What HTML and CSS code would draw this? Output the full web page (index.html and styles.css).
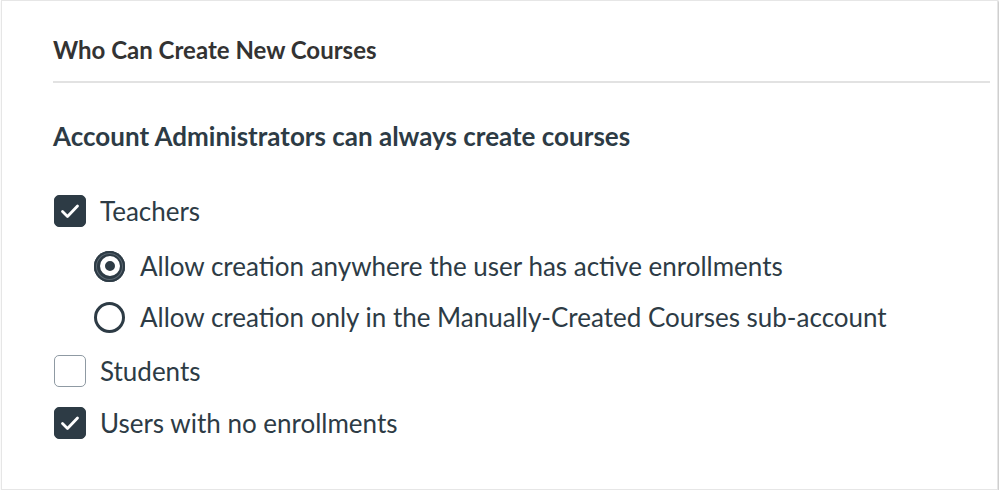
FILE: index.html
```html
<!DOCTYPE html>
<html lang="en">
<head>
  <meta charset="UTF-8" />
  <title>Who Can Create New Courses</title>
  <link rel="stylesheet" href="styles.css">
</head>
<body>
  <div class="panel">
    <div class="panel-header">
      <h2>Who Can Create New Courses</h2>
    </div>

    <h3 class="note">Account Administrators can always create courses</h3>

    <div class="options">
      <label class="check-row">
        <span class="checkbox checked">
          <svg viewBox="0 0 32 32" width="32" height="32"><polyline points="8.5,16.5 13.5,21.5 23.5,11" fill="none" stroke="#fff" stroke-width="2.8" stroke-linecap="round" stroke-linejoin="round"/></svg>
        </span>
        <span class="label">Teachers</span>
      </label>

      <div class="radio-group">
        <label class="radio-row">
          <span class="radio checked"><span class="dot"></span></span>
          <span class="label">Allow creation anywhere the user has active enrollments</span>
        </label>
        <label class="radio-row">
          <span class="radio"></span>
          <span class="label">Allow creation only in the Manually-Created Courses sub-account</span>
        </label>
      </div>

      <label class="check-row">
        <span class="checkbox"></span>
        <span class="label">Students</span>
      </label>

      <label class="check-row">
        <span class="checkbox checked">
          <svg viewBox="0 0 32 32" width="32" height="32"><polyline points="8.5,16.5 13.5,21.5 23.5,11" fill="none" stroke="#fff" stroke-width="2.8" stroke-linecap="round" stroke-linejoin="round"/></svg>
        </span>
        <span class="label">Users with no enrollments</span>
      </label>
    </div>
  </div>
</body>
</html>
```

FILE: styles.css
```css
html, body {
  margin: 0;
  padding: 0;
  background: #fff;
}
body {
  font-family: Lato, "Open Sans", sans-serif;
  color: #2d3b45;
}
.panel {
  box-sizing: border-box;
  width: 997px;
  height: 490px;
  margin-left: 1px;
  border: 1px solid #e6e6e6;
  box-shadow: 1px 1px 2px rgba(0,0,0,0.28);
  padding: 0 7px 0 51px;
}
.panel-header {
  padding-top: 34px;
  padding-bottom: 16px;
  border-bottom: 2px solid #e2e2e2;
}
.panel-header h2 {
  margin: 0;
  font-size: 24px;
  line-height: 30px;
  font-weight: 700;
  color: #333;
}
.note {
  margin: 38px 0 0;
  font-size: 26px;
  line-height: 30px;
  font-weight: 700;
}
.options {
  display: flex;
  flex-direction: column;
  gap: 20px;
  margin-top: 44px;
}
.check-row, .radio-row {
  display: flex;
  align-items: center;
  height: 32px;
}
.label {
  font-size: 26px;
  line-height: 32px;
}
.checkbox {
  box-sizing: border-box;
  width: 32px;
  height: 32px;
  border-radius: 5px;
  border: 1px solid #8f9aa3;
  background: #fff;
  margin: 0 14px 0 1px;
  flex-shrink: 0;
}
.checkbox.checked {
  background: #2d3b45;
  border-color: #2d3b45;
}
.checkbox svg {
  display: block;
  margin: -1px;
}
.radio-group {
  display: flex;
  flex-direction: column;
  gap: 19px;
  margin: 3px 0 2px;
  padding-left: 41px;
}
.radio {
  box-sizing: border-box;
  width: 31px;
  height: 31px;
  border-radius: 50%;
  border: 3px solid #2d3b45;
  background: #fff;
  margin-right: 15px;
  flex-shrink: 0;
  display: flex;
  align-items: center;
  justify-content: center;
}
.radio.checked {
  border: none;
  background: #2d3b45;
  box-shadow: inset 0 0 0 2px #2d3b45, inset 0 0 0 3px #5a6670;
}
.radio .dot {
  box-sizing: border-box;
  width: 20px;
  height: 20px;
  border-radius: 50%;
  background: #2d3b45;
  border: 5px solid #fff;
}
```
